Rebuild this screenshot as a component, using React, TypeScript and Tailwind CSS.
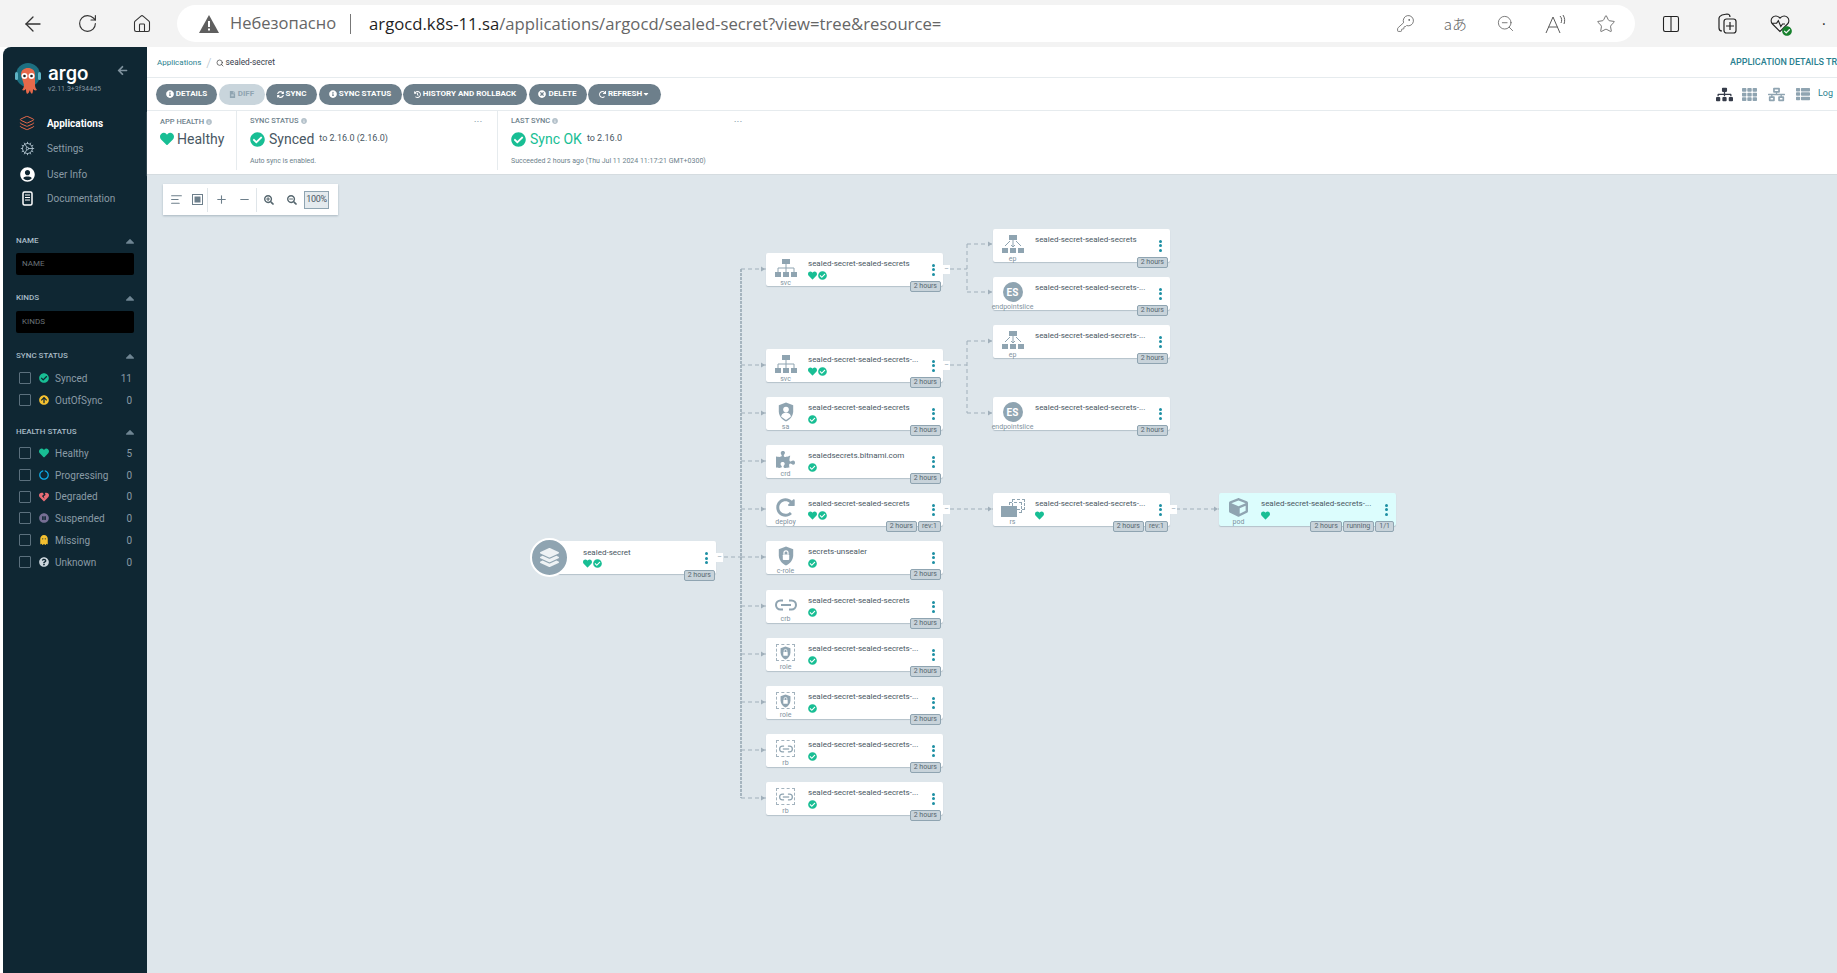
import { ReactNode } from "react";
import {
  ArrowLeft,
  RotateCw,
  Home,
  KeyRound,
  ZoomOut,
  Star,
  Columns2,
  Layers,
  Cog,
  Plus,
  Minus,
  Search,
  AlignLeft,
} from "lucide-react";
import {
  FaHeart,
  FaCheckCircle,
  FaCube,
  FaPuzzlePiece,
  FaRedoAlt,
  FaUserCircle,
  FaInfoCircle,
  FaSyncAlt,
  FaFileAlt,
  FaHistory,
  FaTimesCircle,
  FaRedo,
  FaCaretDown,
  FaCaretUp,
  FaArrowLeft,
  FaSearchPlus,
  FaSearchMinus,
  FaSitemap,
  FaTh,
  FaThList,
  FaNetworkWired,
  FaQuestionCircle,
  FaPauseCircle,
  FaHeartBroken,
  FaGhost,
  FaArrowCircleUp,
  FaCircleNotch,
  FaLayerGroup,
} from "react-icons/fa";

const GREY = "#8fa4b1";

function Sitemap({ endpoints }: { endpoints?: boolean }) {
  return (
    <svg width="24" height="20" viewBox="0 0 24 20" fill={GREY}>
      <rect x="8" y="1" width="8" height="5" />
      <rect x="1" y="14" width="6" height="5" />
      <rect x="9" y="14" width="6" height="5" />
      <rect x="17" y="14" width="6" height="5" />
      {endpoints ? (
        <path d="M12 6v7M10 11l2 2 2-2M9 7l-5 5M15 7l5 5" stroke={GREY} strokeWidth="1" fill="none" />
      ) : (
        <path d="M12 6v8M4 14v-4h16v4" stroke={GREY} strokeWidth="1" fill="none" />
      )}
    </svg>
  );
}

function Shield({ user, small }: { user?: boolean; small?: boolean }) {
  return (
    <svg width={small ? 11 : 16} height={small ? 14 : 20} viewBox="0 0 20 24">
      <path d="M10 0l9 3.5V11c0 6-4 10.500-9 13-5-2.500-9-7-9-13V3.500z" fill={GREY} />
      {user ? (
        <>
          <circle cx="10" cy="9" r="3.500" fill="#fff" />
          <path d="M4 18c0-3.500 3-5 6-5s6 1.500 6 5l-6 4z" fill="#fff" />
        </>
      ) : (
        <>
          <rect x="6" y="10" width="8" height="7" rx="1" fill="#fff" />
          <path d="M7.500 10V8a2.500 2.500 0 015 0v2" stroke="#fff" strokeWidth="1.500" fill="none" />
        </>
      )}
    </svg>
  );
}

function ChainLink({ small }: { small?: boolean }) {
  return (
    <svg width={small ? 14 : 22} height={small ? 8 : 12} viewBox="0 0 22 12" fill="none" stroke={GREY} strokeWidth="2">
      <path d="M8 1.500H5.500a4.500 4.500 0 000 9H8M14 1.500h2.500a4.500 4.500 0 010 9H14" />
      <path d="M6 6h10" />
    </svg>
  );
}

function ReplicaSet() {
  return (
    <div className="relative h-[18px] w-[24px]">
      <div className="absolute right-0 top-0 h-[11px] w-[13px] border border-dashed border-[#8fa4b1]" />
      <div className="absolute right-[3px] top-[3px] h-[11px] w-[13px] border border-dashed border-[#8fa4b1]" />
      <div className="absolute bottom-0 left-0 h-[11px] w-[16px] bg-[#8fa4b1]" />
    </div>
  );
}

function EndpointSlice() {
  return (
    <div className="flex h-[20px] w-[20px] items-center justify-center rounded-full bg-[#8fa4b1] text-[10px] font-bold text-white">
      ES
    </div>
  );
}

function Dashed({ children }: { children: ReactNode }) {
  return (
    <div className="flex h-[17px] w-[19px] items-center justify-center border border-dashed border-[#a3b3be]">
      {children}
    </div>
  );
}

type NodeData = {
  x: number;
  y: number;
  name: string;
  kind: string;
  icon: ReactNode;
  heart?: boolean;
  check?: boolean;
  tags?: string[];
  collapse?: boolean;
  live?: boolean;
};

const NAME = "sealed-secret-sealed-secrets";
const TRUNC = "sealed-secret-sealed-secrets-...";

const NODES: NodeData[] = [
  { x: 766, y: 253, name: NAME, kind: "svc", icon: <Sitemap />, heart: true, check: true, collapse: true },
  { x: 766, y: 349, name: TRUNC, kind: "svc", icon: <Sitemap />, heart: true, check: true, collapse: true },
  { x: 766, y: 397, name: NAME, kind: "sa", icon: <Shield user />, check: true },
  { x: 766, y: 445, name: "sealedsecrets.bitnami.com", kind: "crd", icon: <FaPuzzlePiece size={19} color={GREY} />, check: true },
  { x: 766, y: 493, name: NAME, kind: "deploy", icon: <FaRedoAlt size={19} color={GREY} />, heart: true, check: true, tags: ["2 hours", "rev:1"], collapse: true },
  { x: 766, y: 541, name: "secrets-unsealer", kind: "c-role", icon: <Shield />, check: true },
  { x: 766, y: 590, name: NAME, kind: "crb", icon: <ChainLink />, check: true },
  { x: 766, y: 638, name: TRUNC, kind: "role", icon: <Dashed><Shield small /></Dashed>, check: true },
  { x: 766, y: 686, name: TRUNC, kind: "role", icon: <Dashed><Shield small /></Dashed>, check: true },
  { x: 766, y: 734, name: TRUNC, kind: "rb", icon: <Dashed><ChainLink small /></Dashed>, check: true },
  { x: 766, y: 782, name: TRUNC, kind: "rb", icon: <Dashed><ChainLink small /></Dashed>, check: true },
  { x: 993, y: 229, name: NAME, kind: "ep", icon: <Sitemap endpoints /> },
  { x: 993, y: 277, name: TRUNC, kind: "endpointslice", icon: <EndpointSlice /> },
  { x: 993, y: 325, name: TRUNC, kind: "ep", icon: <Sitemap endpoints /> },
  { x: 993, y: 397, name: TRUNC, kind: "endpointslice", icon: <EndpointSlice /> },
  { x: 993, y: 493, name: TRUNC, kind: "rs", icon: <ReplicaSet />, heart: true, tags: ["2 hours", "rev:1"], collapse: true },
  { x: 1219, y: 493, name: TRUNC, kind: "pod", icon: <FaCube size={19} color={GREY} />, heart: true, tags: ["2 hours", "running", "1/1"], live: true },
];

// edges in page coordinates minus the canvas origin (147, 175)
const EDGE_TARGETS: [number, number, number][] = [
  ...[269, 365, 413, 461, 509, 557, 606, 654, 702, 750, 798].map((y) => [741, y, 766] as [number, number, number]),
  [967, 244, 993],
  [967, 292, 993],
  [967, 341, 993],
  [967, 413, 993],
];

function Edges() {
  const ox = 147;
  const oy = 175;
  const dash = "4 3";
  return (
    <svg className="absolute inset-0" width="1690" height="798" fill="none" stroke="#a0afba" strokeWidth="1">
      <path d={`M${741 - ox} ${269 - oy}V${798 - oy}`} strokeDasharray="3 1" strokeWidth="1.500" stroke="#94a5b1" />
      <path d={`M${724 - ox} ${557 - oy}H${741 - ox}`} strokeDasharray={dash} />
      <path d={`M${950 - ox} ${269 - oy}H${967 - ox}M${967 - ox} ${244 - oy}V${292 - oy}`} strokeDasharray={dash} />
      <path d={`M${950 - ox} ${365 - oy}H${967 - ox}M${967 - ox} ${341 - oy}V${413 - oy}`} strokeDasharray={dash} />
      <path d={`M${950 - ox} ${509 - oy}H${993 - ox}`} strokeDasharray={dash} />
      <path d={`M${1176 - ox} ${509 - oy}H${1219 - ox}`} strokeDasharray={dash} />
      {EDGE_TARGETS.map(([x1, y, x2]) => (
        <path key={`${x1}-${y}`} d={`M${x1 - ox} ${y - oy}H${x2 - ox}`} strokeDasharray={dash} />
      ))}
      {[...EDGE_TARGETS, [950, 509, 993] as [number, number, number], [1176, 509, 1219] as [number, number, number]].map(([, y, x2]) => (
        <path key={`a${x2}-${y}`} d={`M${x2 - ox - 5} ${y - oy - 2.500}l4 2.500l-4 2.500z`} fill="#a0afba" stroke="none" />
      ))}
    </svg>
  );
}

function StatusIcons({ heart, check }: { heart?: boolean; check?: boolean }) {
  return (
    <div className="flex h-[9px] items-center gap-[1px]">
      {heart && <FaHeart size={9} color="#18be94" />}
      {check && <FaCheckCircle size={9} color="#18be94" />}
    </div>
  );
}

function Tag({ text }: { text: string }) {
  return (
    <span className="flex h-[11px] items-center rounded-[2px] border border-[#8fa4b1] bg-[#c8d3da] px-[3px] text-[7px] leading-none text-[#56676f]">
      {text}
    </span>
  );
}

function Dots() {
  return (
    <div className="flex flex-col gap-[1.500px]">
      <span className="h-[3px] w-[3px] rounded-full bg-[#1d8fa3]" />
      <span className="h-[3px] w-[3px] rounded-full bg-[#1d8fa3]" />
      <span className="h-[3px] w-[3px] rounded-full bg-[#1d8fa3]" />
    </div>
  );
}

function GraphNode({ node }: { node: NodeData }) {
  const tags = node.tags ?? ["2 hours"];
  return (
    <div
      className={`absolute flex h-[33px] w-[177px] rounded-[2px] shadow-[0_1px_1px_#b4c1ca] ${node.live ? "bg-[#dcfdfd]" : "bg-white"}`}
      style={{ left: node.x - 147, top: node.y - 175 }}
    >
      <div className="flex h-full w-[39px] flex-col items-center pt-[5px]">
        <div className="flex h-[20px] items-center justify-center">{node.icon}</div>
        <span className="mt-[1px] whitespace-nowrap text-[7px] leading-[8px] text-[#7f929e]">{node.kind}</span>
      </div>
      <div className="ml-[3px] flex-1 pt-[6px]">
        <div className="whitespace-nowrap text-[8px] leading-[9px] text-[#495763]">{node.name}</div>
        <div className="mt-[3px]">
          <StatusIcons heart={node.heart} check={node.check} />
        </div>
      </div>
      <div className="mr-[8px] flex items-center">
        <Dots />
      </div>
      <div className="absolute right-[2px] top-[28px] flex gap-[1px]">
        {tags.map((t) => (
          <Tag key={t} text={t} />
        ))}
      </div>
      {node.collapse && (
        <div className="absolute left-full top-[12px] flex h-[9px] w-[7px] items-center justify-center bg-white text-[7px] leading-none text-[#8fa4b1]">
          –
        </div>
      )}
    </div>
  );
}

function AppNode() {
  return (
    <div className="absolute left-[383px] top-[363px] h-[39px] w-[186px]">
      <div className="absolute bottom-[3px] left-[18px] top-[3px] w-[168px] rounded-[2px] bg-white shadow-[0_1px_1px_#b4c1ca]">
        <div className="absolute left-[35px] top-[7px] text-[8px] leading-[9px] text-[#495763]">sealed-secret</div>
        <div className="absolute left-[35px] top-[18px]">
          <StatusIcons heart check />
        </div>
        <div className="absolute right-[8px] top-[11px]">
          <Dots />
        </div>
        <div className="absolute right-[1px] top-[29px] flex">
          <Tag text="2 hours" />
        </div>
        <div className="absolute left-full top-[12px] flex h-[9px] w-[7px] items-center justify-center bg-white text-[7px] leading-none text-[#8fa4b1]">
          –
        </div>
      </div>
      <div className="absolute left-0 top-0 flex h-[39px] w-[39px] items-center justify-center rounded-full border-2 border-white bg-[#8fa4b1]">
        <FaLayerGroup size={19} color="#eef2f4" />
      </div>
    </div>
  );
}

function Logo() {
  return (
    <svg width="26" height="34" viewBox="0 0 26 34">
      <circle cx="13" cy="13" r="12" fill="#1d6f80" />
      <rect x="0" y="10" width="3" height="8" rx="1.500" fill="#5fb3c4" />
      <rect x="23" y="10" width="3" height="8" rx="1.500" fill="#5fb3c4" />
      <path d="M6 13c0-5 3-7 7-7s7 2 7 7v10c0 2 1 4 2 5-2 1-3 0-4-1 0 2 0 3-1 5-1-1-2-2-2-4-1 2-1 3-3 4-1-2-1-3-1-5-1 1-2 2-4 1 1-1 2-3 2-5z" fill="#e8694a" />
      <circle cx="9.500" cy="14" r="3" fill="#fff" />
      <circle cx="16.500" cy="14" r="3" fill="#fff" />
      <circle cx="9.500" cy="14" r="1.300" fill="#222" />
      <circle cx="16.500" cy="14" r="1.300" fill="#222" />
    </svg>
  );
}

function NavItem({ icon, label, active, h }: { icon: ReactNode; label: string; active?: boolean; h: string }) {
  return (
    <div className={`flex items-center ${h}`}>
      <div className="flex w-[44px] justify-center pl-[4px]">{icon}</div>
      <span className={`text-[10px] ${active ? "font-bold text-white" : "text-[#8a9ba6]"}`}>{label}</span>
    </div>
  );
}

function FilterHead({ label }: { label: string }) {
  return (
    <div className="flex h-[12px] items-center justify-between pl-[13px] pr-[10px]">
      <span className="text-[8px] font-medium text-[#a9bcc7]">{label}</span>
      <FaCaretUp size={14} color="#6f8593" />
    </div>
  );
}

function FilterInput({ label, mt }: { label: string; mt: string }) {
  return (
    <div className={`ml-[13px] flex h-[22px] w-[118px] items-center rounded-[2px] bg-black pl-[6px] text-[8px] text-[#6a7378] ${mt}`}>
      {label}
    </div>
  );
}

function FilterRow({ icon, label, count, h }: { icon: ReactNode; label: string; count: number; h: string }) {
  return (
    <div className={`flex items-center pl-[16px] pr-[15px] ${h}`}>
      <span className="h-[12px] w-[12px] rounded-[1px] border border-[#5b707d]" />
      <span className="ml-[8px] flex w-[16px] items-center">{icon}</span>
      <span className="text-[10px] text-[#8a9ba6]">{label}</span>
      <span className="ml-auto text-[10px] text-[#8a9ba6]">{count}</span>
    </div>
  );
}

function Sidebar() {
  return (
    <aside className="w-[144px] shrink-0 rounded-tl-lg bg-[#0f2733] font-['Roboto',sans-serif]">
      <div className="relative h-[64px]">
        <div className="absolute left-[12px] top-[15px]">
          <Logo />
        </div>
        <div className="absolute left-[45px] top-[14px] text-[20px] font-medium leading-[24px] text-white">argo</div>
        <div className="absolute left-[45px] top-[37px] text-[7px] text-[#8a9ba6]">v2.11.3+3f344d5</div>
        <FaArrowLeft size={11} color="#7f929e" className="absolute left-[114px] top-[18px]" />
      </div>
      <NavItem icon={<Layers size={16} color="#e8694a" strokeWidth={1.500} />} label="Applications" active h="h-[24px]" />
      <NavItem icon={<Cog size={15} color="#a9bcc7" strokeWidth={1.500} />} label="Settings" h="h-[26px]" />
      <NavItem icon={<FaUserCircle size={15} color="#fff" />} label="User Info" h="h-[26px]" />
      <NavItem
        icon={
          <svg width="11" height="15" viewBox="0 0 11 15" fill="none">
            <rect x="1" y="1" width="9" height="13" rx="1.500" stroke="#fff" strokeWidth="1.500" />
            <path d="M3 4h5M3 6.500h5M3 9h5" stroke="#fff" strokeWidth="1" />
          </svg>
        }
        label="Documentation"
        h="h-[23px]"
      />
      <div className="mt-[25px]">
        <FilterHead label="NAME" />
      </div>
      <FilterInput label="NAME" mt="mt-[6px]" />
      <div className="mt-[17px]">
        <FilterHead label="KINDS" />
      </div>
      <FilterInput label="KINDS" mt="mt-[7px]" />
      <div className="mt-[17px]">
        <FilterHead label="SYNC STATUS" />
      </div>
      <div className="mt-[5px]">
        <FilterRow icon={<FaCheckCircle size={10} color="#18be94" />} label="Synced" count={11} h="h-[22px]" />
        <FilterRow icon={<FaArrowCircleUp size={10} color="#f4c030" />} label="OutOfSync" count={0} h="h-[22px]" />
      </div>
      <div className="mt-[15px]">
        <FilterHead label="HEALTH STATUS" />
      </div>
      <div className="mt-[4px]">
        <FilterRow icon={<FaHeart size={10} color="#18be94" />} label="Healthy" count={5} h="h-[22px]" />
        <FilterRow icon={<FaCircleNotch size={10} color="#0dadea" />} label="Progressing" count={0} h="h-[22px]" />
        <FilterRow icon={<FaHeartBroken size={10} color="#e96d76" />} label="Degraded" count={0} h="h-[21px]" />
        <FilterRow icon={<FaPauseCircle size={10} color="#766f94" />} label="Suspended" count={0} h="h-[22px]" />
        <FilterRow icon={<FaGhost size={10} color="#f4c030" />} label="Missing" count={0} h="h-[22px]" />
        <FilterRow icon={<FaQuestionCircle size={10} color="#ccd6dd" />} label="Unknown" count={0} h="h-[22px]" />
      </div>
    </aside>
  );
}

function ActionButton({ icon, label, w, disabled }: { icon: ReactNode; label: ReactNode; w: string; disabled?: boolean }) {
  return (
    <div
      className={`flex h-[21px] items-center justify-center gap-[2px] rounded-full text-[8px] font-bold whitespace-nowrap ${w} ${
        disabled ? "bg-[#c9d5dc] text-[#8fa4b1]" : "bg-[#6d7f8b] text-white"
      }`}
    >
      {icon}
      {label}
    </div>
  );
}

function Hint() {
  return <FaInfoCircle size={6} color="#b4c1ca" className="ml-[2px] inline" />;
}

function StatusBar() {
  return (
    <div className="flex h-[64px] items-stretch border-b border-[#d5dce0] bg-white pb-[4px] text-[#495763] shadow-[0_1px_1px_#ccd6dd]">
      <div className="w-[90px] border-r border-[#e6ebee] pl-[13px] pt-[6px]">
        <div className="text-[7.5px] font-medium leading-[10px] text-[#6d7f8b]">
          APP HEALTH
          <Hint />
        </div>
        <div className="mt-[3px] flex items-center gap-[3px]">
          <FaHeart size={14} color="#18be94" />
          <span className="text-[14px] leading-[18px]">Healthy</span>
        </div>
      </div>
      <div className="relative w-[261px] border-r border-[#e6ebee] pl-[13px] pt-[5px]">
        <div className="text-[7.5px] font-medium leading-[10px] text-[#6d7f8b]">
          SYNC STATUS
          <Hint />
        </div>
        <div className="mt-[4px] flex items-center">
          <FaCheckCircle size={15} color="#18be94" />
          <span className="ml-[4px] text-[14px] leading-[18px]">Synced</span>
          <span className="ml-[5px] text-[9px]">to 2.16.0 (2.16.0)</span>
        </div>
        <div className="mt-[8px] text-[7px] text-[#6d7f8b]">Auto sync is enabled.</div>
        <span className="absolute left-[237px] top-[3px] text-[8px] font-bold tracking-[0.5px] text-[#8fa4b1]">...</span>
      </div>
      <div className="relative w-[300px] pl-[13px] pt-[5px]">
        <div className="text-[7.5px] font-medium leading-[10px] text-[#6d7f8b]">
          LAST SYNC
          <Hint />
        </div>
        <div className="mt-[4px] flex items-center">
          <FaCheckCircle size={15} color="#18be94" />
          <span className="ml-[4px] text-[14px] leading-[18px] text-[#18be94]">Sync OK</span>
          <span className="ml-[5px] text-[9px]">to 2.16.0</span>
        </div>
        <div className="mt-[8px] whitespace-nowrap text-[7px] text-[#6d7f8b]">
          Succeeded 2 hours ago (Thu Jul 11 2024 11:17:21 GMT+0300)
        </div>
        <span className="absolute left-[236px] top-[3px] text-[8px] font-bold tracking-[0.5px] text-[#8fa4b1]">...</span>
      </div>
    </div>
  );
}

function ZoomControls() {
  const c = "#6d7f8b";
  return (
    <div className="absolute left-[16px] top-[9px] flex h-[31px] w-[175px] items-center bg-white pl-[7px] shadow-[0_1px_2px_#a9b7c0]">
      <AlignLeft size={13} color={c} />
      <svg width="11" height="11" viewBox="0 0 11 11" className="ml-[9px]">
        <rect x="0.500" y="0.500" width="10" height="10" fill="none" stroke={c} />
        <rect x="2.500" y="2.500" width="6" height="6" fill={c} />
      </svg>
      <span className="ml-[4px] h-[24px] w-px bg-[#dfe5e9]" />
      <Plus size={13} color={c} className="ml-[7px]" />
      <Minus size={13} color={c} className="ml-[10px]" />
      <span className="ml-[5px] h-[24px] w-px bg-[#dfe5e9]" />
      <FaSearchPlus size={10} color="#56676f" className="ml-[7px]" />
      <FaSearchMinus size={10} color="#56676f" className="ml-[13px]" />
      <span className="ml-[7px] flex h-[18px] w-[25px] items-center justify-center border border-[#8fa4b1] bg-[#e4eaee] text-[9px] tracking-[-0.3px] text-[#495763]">
        100%
      </span>
    </div>
  );
}

function BrowserBar() {
  const c = "#5b5b5b";
  return (
    <div className="flex h-[47px] shrink-0 items-center bg-[#f3f3f3] font-['Open_Sans',sans-serif]">
      <ArrowLeft size={24} color="#333" strokeWidth={1.300} className="ml-[21px]" />
      <RotateCw size={21} color="#333" strokeWidth={1.300} className="ml-[32px]" />
      <Home size={20} color="#333" strokeWidth={1.300} className="ml-[34px]" />
      <div className="ml-[25px] flex h-[37px] w-[1458px] items-center rounded-full bg-white pl-[22px]">
        <svg width="20" height="18" viewBox="0 0 20 18">
          <path d="M10 0l10 18H0z" fill="#5f5f5f" />
          <rect x="9" y="6" width="2" height="6" fill="#fff" />
          <rect x="9" y="13.500" width="2" height="2" fill="#fff" />
        </svg>
        <span className="ml-[11px] text-[16.500px] text-[#666]">Небезопасно</span>
        <span className="ml-[14px] h-[20px] w-px bg-[#777]" />
        <span className="ml-[18px] text-[16.700px] text-[#1f1f1f]">argocd.k8s-11.sa</span>
        <span className="text-[16.700px] text-[#666]">/applications/argocd/sealed-secret?view=tree&amp;resource=</span>
        <div className="ml-auto flex items-center pr-[19px]">
          <KeyRound size={19} color={c} strokeWidth={1} />
          <span className="ml-[29px] font-['Noto_Sans_CJK_JP',sans-serif] text-[15px] font-light leading-none text-[#666]">aあ</span>
          <ZoomOut size={19} color={c} strokeWidth={1} className="ml-[29px]" />
          <svg width="22" height="20" viewBox="0 0 22 20" fill="none" stroke={c} strokeWidth="1" className="ml-[30px]">
            <path d="M1 19L8 3l7 16M3.500 13h9M15 2c2 2 2 5 1 7M18 1c2 3 2 6 1 9" />
          </svg>
          <Star size={20} color={c} strokeWidth={1} className="ml-[29px]" />
        </div>
      </div>
      <Columns2 size={20} color="#222" strokeWidth={1.300} className="ml-[26px]" />
      <svg width="22" height="22" viewBox="0 0 22 22" fill="none" stroke="#222" strokeWidth="1.200" className="ml-[35px]">
        <path d="M6 18c-2 0-3-1-3-3V5c0-1 1-2 3-3l5-1c2 0 3 1 3 3" />
        <rect x="8" y="6" width="12" height="14" rx="2.500" />
        <path d="M14 9v8M10 13h8" />
      </svg>
      <div className="relative ml-[32px]">
        <svg width="20" height="20" viewBox="0 0 24 24" fill="none" stroke="#222" strokeWidth="1.300">
          <path d="M12 21L3 12a5.500 5.500 0 018-8l1 1 1-1a5.500 5.500 0 018 8zM2 11h6l2-3 3 7 2-3h3" />
        </svg>
        <FaCheckCircle size={10} color="#16802c" className="absolute -bottom-[2px] -right-[2px]" />
      </div>
      <span className="ml-[32px] text-[14px] text-[#222]">·</span>
    </div>
  );
}

export default function App() {
  return (
    <div className="flex h-[973px] w-[1837px] flex-col overflow-hidden bg-white font-['Roboto',sans-serif]">
      <BrowserBar />
      <div className="flex min-h-0 flex-1 pl-[3px]">
        <Sidebar />
        <main className="flex min-w-0 flex-1 flex-col">
          <div className="flex h-[31px] shrink-0 items-center overflow-hidden border-b border-[#e6ebee] pl-[10px] pt-[1px] text-[8px]">
            <span className="text-[#2a7f8f]">Applications</span>
            <span className="mx-[5px] text-[13px] font-light text-[#b4c1ca]">/</span>
            <Search size={8} color="#333" strokeWidth={2} />
            <span className="ml-[1px] text-[8.300px] text-[#363c4a]">sealed-secret</span>
            <span className="ml-auto w-[107px] shrink-0 overflow-hidden whitespace-nowrap text-[9px] font-medium text-[#2a7f8f]">
              APPLICATION DETAILS TREE
            </span>
          </div>
          <div className="flex h-[33px] shrink-0 items-center border-b border-[#e6ebee] pl-[9px] pr-0">
            <div className="flex items-center gap-[1.500px]">
              <ActionButton w="w-[61px]" icon={<FaInfoCircle size={8} />} label="DETAILS" />
              <ActionButton w="w-[46px]" disabled icon={<FaFileAlt size={7} />} label="DIFF" />
              <ActionButton w="w-[51px]" icon={<FaSyncAlt size={7} />} label="SYNC" />
              <ActionButton w="w-[83px]" icon={<FaInfoCircle size={8} />} label="SYNC STATUS" />
              <ActionButton w="w-[124px]" icon={<FaHistory size={7} />} label="HISTORY AND ROLLBACK" />
              <ActionButton w="w-[58px]" icon={<FaTimesCircle size={8} />} label="DELETE" />
              <ActionButton w="w-[73px]" icon={<FaRedo size={7} />} label={<span className="flex items-center">REFRESH<FaCaretDown size={8} /></span>} />
            </div>
            <div className="ml-auto flex w-[121px] shrink-0 items-center overflow-hidden">
              <FaSitemap size={17} color="#363c4a" />
              <FaTh size={15} color="#8fa4b1" className="ml-[9px]" />
              <FaNetworkWired size={17} color="#8fa4b1" className="ml-[11px]" />
              <FaThList size={14} color="#8fa4b1" className="ml-[11px]" />
              <span className="ml-[8px] text-[9px] text-[#2a7f8f]">Log</span>
            </div>
          </div>
          <StatusBar />
          <div className="relative min-h-0 flex-1 bg-[#dee6eb]">
            <ZoomControls />
            <Edges />
            <AppNode />
            {NODES.map((n) => (
              <GraphNode key={`${n.x}-${n.y}`} node={n} />
            ))}
          </div>
        </main>
      </div>
    </div>
  );
}
